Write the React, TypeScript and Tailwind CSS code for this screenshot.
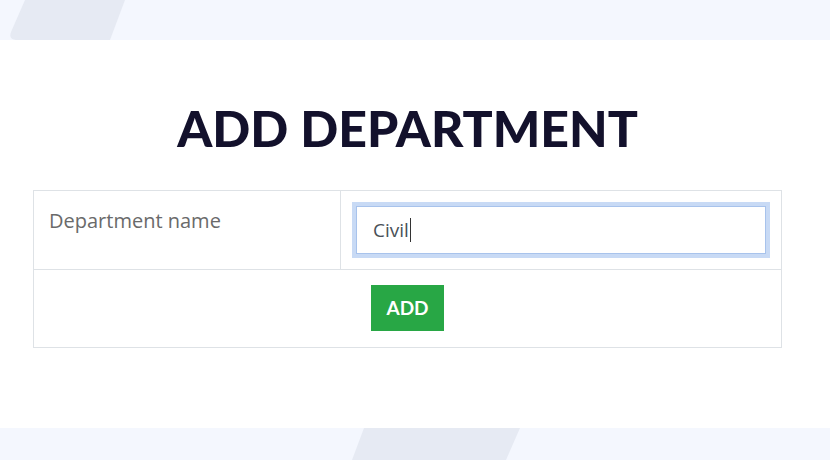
export default function App() {
  return (
    <div className="flex h-[460px] w-[830px] flex-col overflow-hidden bg-white">
      {/* top band */}
      <div className="relative h-[40px] shrink-0 bg-[#f4f7fe]">
        <svg className="absolute left-0 top-0" width="140" height="40" viewBox="0 0 140 40">
          <path d="M25 0 H125 L110 40 H18 Q8 40 11 32 Z" fill="#e6eaf3" />
        </svg>
      </div>

      <div className="flex w-[815px] flex-1 flex-col items-center">
        <h1 className="mt-[63px] text-[50px] font-black leading-none text-[#13112c] [font-family:Lato,sans-serif]">
          ADD DEPARTMENT
        </h1>

        <table className="mt-[37px] w-[749px] border-collapse border border-[#dee2e6] [font-family:'Open_Sans',sans-serif]">
          <tbody>
            <tr>
              <td className="w-[307px] border border-[#dee2e6] px-[15px] pb-[16px] pt-[15px] align-top text-[20px] text-[#6a6a6a]">
                Department name
              </td>
              <td className="border border-[#dee2e6] px-[15px] py-[15px]">
                <div className="flex h-[48px] items-center border border-[#a8c3ec] px-4 text-[19px] text-[#495057] ring-4 ring-[#c8daf5]">
                  Civil<span className="ml-px h-[24px] w-px bg-[#333]" />
                </div>
              </td>
            </tr>
            <tr>
              <td colSpan={2} className="border border-[#dee2e6] pb-[16px] pt-[15px] text-center">
                <button className="h-[46px] w-[73px] bg-[#28a745] text-[19px] font-bold text-white [font-family:Lato,sans-serif]">
                  ADD
                </button>
              </td>
            </tr>
          </tbody>
        </table>
      </div>

      {/* bottom band */}
      <div className="relative h-[32px] shrink-0 bg-[#f4f7fe]">
        <svg className="absolute left-[340px] top-0" width="200" height="32" viewBox="0 0 200 32">
          <path d="M24 0 H180 L166 32 H12 Z" fill="#e6eaf3" />
        </svg>
      </div>
    </div>
  )
}
